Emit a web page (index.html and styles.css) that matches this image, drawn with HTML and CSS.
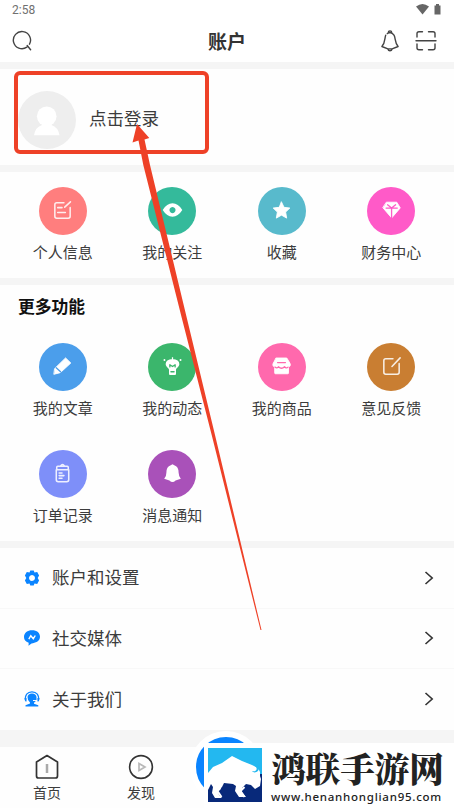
FILE: index.html
```html
<!DOCTYPE html>
<html lang="zh-CN">
<head>
<meta charset="utf-8">
<title>账户</title>
<link rel="stylesheet" href="styles.css">
</head>
<body>
<div class="screen">
  <div class="status">
    <span>2:58</span>
    <svg width="26" height="13" viewBox="0 0 26 13"><path d="M0 3.5Q6.5-1.5 13 3.5L6.5 11.5Z" fill="#666"/><path d="M20 1h3v1.5h1.5v9h-6v-9H20z" fill="#666"/></svg>
  </div>
  <header class="bar">
    <svg class="ico" width="22" height="22" viewBox="0 0 22 22"><path d="M14.800 17.200A8.600 8.600 0 1 1 17.500 14.200M15.200 15.500l3.400 4.300"/></svg>
    <h1>账户</h1>
    <div class="actions">
      <svg class="ico" width="20" height="24" viewBox="0 0 20 24"><path d="M5.700 6.200C4.500 9 5.500 13.500 1.900 17.500l6 2.400h4.200l6-2.400C14.500 13.500 15.800 9 14 6.200 12.900 4.500 11.500 3.700 10 3.500 8.900 3.700 8 4.100 7.300 4.600M8.300 3.400c0-2 3.400-2 3.400 0M7.900 20c.6 2.300 3.600 2.300 4.200 0"/></svg>
      <svg class="ico" width="22" height="22" viewBox="0 0 22 22"><path d="M2 7V3.500Q2 1.700 4 1.700h3.500M13.500 1.700H18q2 0 2 1.800V7M2 14v4q0 1.700 2 1.700h3.500M13.500 19.700H18q2 0 2-1.700v-4M1 10.700h20"/></svg>
    </div>
  </header>

  <section class="profile">
    <svg class="avatar" width="58" height="58" viewBox="0 0 58 58"><circle cx="29" cy="29" r="29" fill="#eee"/><circle cx="28.700" cy="25.300" r="9.800" fill="#fff"/><path d="M24 32h9.500v2q6.500 2 8 10.300H16q1.500-8.300 8-10.300z" fill="#fff"/></svg>
    <span>点击登录</span>
  </section>

  <section class="grid top">
    <div class="item"><div class="disc coral"><svg class="glyph line" viewBox="0 0 24 24"><path d="M13.500 4H6Q4 4 4 6v12q0 2 2 2h12q2 0 2-2V9M14.300 8.500l6-5.500M7 9h4.500M7 14h8"/></svg></div><span>个人信息</span></div>
    <div class="item"><div class="disc teal"><svg class="glyph solid" viewBox="0 0 24 24"><path fill-rule="evenodd" d="M.8 11.500Q5.500 3.800 12 3.800t11.200 7.700Q18.500 19 12 19T.8 11.500zM12 8a3.500 3.500 0 1 0 .01 0z"/></svg></div><span>我的关注</span></div>
    <div class="item"><div class="disc cyan"><svg class="glyph solid round" viewBox="0 0 24 24"><path d="M12 2.300l2.900 6.100 6.600.8-4.800 4.600 1.200 6.900L12 17.300l-5.900 3.400 1.200-6.900-4.800-4.600 6.600-.8z"/></svg></div><span>收藏</span></div>
    <div class="item"><div class="disc pink"><svg class="glyph solid round" viewBox="0 0 24 24"><path d="M6.500 2.500h11.500l4 6.500L12.200 20.500 2.300 9z"/><path class="cut" d="M5.800 9.200h12.800M7.500 5.500l4.600 3.700 4.600-3.700M12.100 9.500V20"/></svg></div><span>财务中心</span></div>
  </section>

  <section class="more">
    <h2>更多功能</h2>
    <div class="grid">
      <div class="item"><div class="disc blue"><svg class="glyph solid round" viewBox="0 0 24 24"><path d="M3.200 14.200L15.500 2.200 21.500 8 9.500 19 2.500 20.800z"/><path class="cut" d="M4.800 13.500l5 4.500"/></svg></div><span>我的文章</span></div>
      <div class="item"><div class="disc green"><svg class="glyph solid" viewBox="0 0 24 24"><path d="M8 15.500C7.500 13.500 4.200 12.500 4.200 9.200Q4.200 3.800 12 3.500q7.800.3 7.800 5.700c0 3.300-3.300 4.300-3.800 6.300v5q0 1.200-1.200 1.200H9.200Q8 21.700 8 20.500zM11.300 1.300h1.400v3h-1.400z"/><circle cx="2.800" cy="4.500" r="1.100"/><circle cx="21.200" cy="4.500" r="1.100"/><path class="cut" d="M9 12.500V10l3 2 3-2v2.500M10.200 18h3.600"/></svg></div><span>我的动态</span></div>
      <div class="item"><div class="disc rose"><svg class="glyph solid round" viewBox="0 0 24 24"><path d="M6 2.300h12l2.500 4q3.500 5-.5 6.200v6.800q0 1-1 1H5.200q-1 0-1-1v-6.800Q.2 11.300 3.600 6.300z"/><path class="cut" d="M7.500 7.500h9M4.500 12.700q2.500 2 4-.4 3.500 3.400 7 0 2 2.400 4 .4"/></svg></div><span>我的商品</span></div>
      <div class="item"><div class="disc brown"><svg class="glyph line" viewBox="0 0 24 24"><path d="M13.500 4H6Q4 4 4 6v12q0 2 2 2h12q2 0 2-2V9M12.500 12l8.500-9"/></svg></div><span>意见反馈</span></div>
      <div class="item"><div class="disc violet"><svg class="glyph line" viewBox="0 0 24 24"><path d="M5.500 8h13v10.500q0 2-2 2h-9q-2 0-2-2zM6 7V5.500q0-1 1-1h10q1 0 1 1V7M10 4.200q2-3 4 0M8.500 11.500h3M8.500 14.200h5M8.500 17h3"/></svg></div><span>订单记录</span></div>
      <div class="item"><div class="disc purple"><svg class="glyph solid" viewBox="0 0 24 24"><path d="M12 1.500l2 1.200q5 1.800 5 8.300.2 4.500 2.500 7l-6 2Q12 23.500 8.500 20l-6-2Q5 15.500 5 11q0-6.500 5-8.300z"/></svg></div><span>消息通知</span></div>
    </div>
  </section>

  <nav class="list">
    <div class="row"><svg width="16" height="16" viewBox="0 0 16 16"><path fill="#0a84ff" fill-rule="evenodd" d="M6.300.5h3.400l.8 2 2.700-.4 1.900 3.300L13.700 8l1.400 2.600-1.900 3.300-2.700-.4-.8 2H6.300l-.8-2-2.700.4L.9 10.600 2.300 8 .9 5.400l1.900-3.300 2.700.4zM8 5a3 3 0 1 0 .01 0z"/></svg><span>账户和设置</span><svg class="chev" width="10" height="14" viewBox="0 0 10 14"><path d="M1.500 1l6.700 6-6.700 6"/></svg></div>
    <div class="row"><svg width="16" height="16" viewBox="0 0 16 16"><path fill="#0a84ff" d="M8 .2c5 0 8 2.600 8 6.600 0 4.500-4.700 6.300-8.500 6.600l-3 2.400.2-3C1.500 11.800 0 9.700 0 7 0 2.900 3.500.2 8 .2z"/><path d="M4.800 9.200l2-3.500 2.500 3 2-3.200" fill="none" stroke="#fff" stroke-width="1.400"/></svg><span>社交媒体</span><svg class="chev" width="10" height="14" viewBox="0 0 10 14"><path d="M1.500 1l6.700 6-6.700 6"/></svg></div>
    <div class="row"><svg width="16" height="16" viewBox="0 0 16 16"><path fill="none" stroke="#0a84ff" stroke-width="1.200" d="M1.600 9.500C.5 4 3.500.8 8 .8s7.500 3.200 6.400 8.700"/><path fill="#0a84ff" d="M3.500 6Q4 2.500 8 2.500T12.500 6v3H9v1h2.800L10 11.700v1l4.300 1.500V15.500H1.500v-1.300L6 12.500v-1Q3.500 9.500 3.500 6zM.5 7h2v3.500H1.500Q.5 9 .5 7zM13.500 7h2q0 2-1 3.500h-1z"/></svg><span>关于我们</span><svg class="chev" width="10" height="14" viewBox="0 0 10 14"><path d="M1.500 1l6.700 6-6.700 6"/></svg></div>
  </nav>

  <footer class="tabs">
    <div class="tab"><svg width="24" height="26" viewBox="0 0 24 26"><path d="M12 1.500L1.500 8v14q0 2 2 2h17q2 0 2-2V8z" fill="none" stroke="#333" stroke-width="1.700" stroke-linejoin="round"/><path d="M12 10v9" stroke="#aaa" stroke-width="2.500"/></svg><span>首页</span></div>
    <div class="tab"><svg width="26" height="26" viewBox="0 0 26 26"><circle cx="13" cy="13" r="11.400" fill="none" stroke="#333" stroke-width="1.600"/><path d="M11 9.500l6 3.500-6 3.500z" fill="none" stroke="#b8b8b8" stroke-width="1.700"/></svg><span>发现</span></div>
  </footer>
  <div class="publish"></div>

  <div class="brand">
    <svg width="54" height="54" viewBox="0 0 54 54"><path fill="#23b8f0" d="M0 0h54v26H0z"/><path fill="#08297a" d="M0 26h54v28H0z"/><path fill="#fff" d="M0 25L5 19 14 15 24 8 34 13 44 17 50 20 52 24 52 28 53 31 52 38 47 41 43 37 38 36 34 40 34 44 38 49H31L27 43 28 38 25 36 16 35 14 39 10 43 11 47 14 50H7L4 45 5 39 3 36 0 42z"/><path fill="#23b8f0" d="M47 11C43 14 45 17 48 19 50 22 47 24 44 23 46 26 51 24 51 20 51 17 45 16 47 11z"/><path fill="none" stroke="#08297a" stroke-width="1.500" d="M15 40l-3 3 3 4M39 38l-4 4 4 5"/><path fill="none" stroke="#fff" stroke-width="2" d="M12.500 40l-3 3 4 6M36.500 39l-4 4 4 6"/></svg>
    <div class="brandtext"><strong>鸿联手游网</strong><span>www.henanhonglian95.com</span></div>
  </div>

  <div class="frame"></div>
  <svg class="arrow" width="454" height="808" viewBox="0 0 454 808"><path fill="#ee4127" d="M137 124L149.300 138 144.500 139.500 150 165 187.300 320 215 435 261.500 630 260.500 630 211.700 435 182.300 320 143.300 165 138.500 140.500 132.500 142.500z"/></svg>
</div>
</body>
</html>
```
FILE: styles.css
```css
* { box-sizing: border-box; }
body { margin: 0; background: #f5f5f5; color: #3c3c3c; font-family: "Noto Sans CJK SC", sans-serif; }
svg { display: block; flex: none; }
h1, h2 { margin: 0; }
.screen { position: relative; width: 454px; height: 808px; overflow: hidden; display: flex; flex-direction: column; }
.status { height: 20px; flex: none; background: #fff; display: flex; justify-content: space-between; align-items: center; padding: 0 12px; font: 12px Roboto, sans-serif; color: #707070; }
.status svg { margin: -1px 0 0; }
.bar { height: 42px; flex: none; background: #fff; display: grid; grid-template-columns: 1fr auto 1fr; align-items: center; padding: 0 17px 0 12px; }
.bar h1 { font-size: 19px; line-height: 24px; margin-left: 5px; color: #333; }
.ico { fill: none; stroke: #444; stroke-width: 1.4; stroke-linecap: round; stroke-linejoin: round; }
.actions { display: flex; justify-content: flex-end; align-items: center; gap: 15px; }
.profile { height: 96px; flex: none; margin-top: 7px; padding: 6px 18px 0; background: #fefefe; display: flex; align-items: center; gap: 13px; font-size: 17.5px; }
.profile span { margin-top: -5px; }
.grid { display: grid; grid-template-columns: repeat(4, 1fr); padding: 0 8px; }
.grid.top { height: 106px; flex: none; margin-top: 7px; padding-top: 15px; background: #fefefe; }
.item { height: 107px; display: flex; flex-direction: column; align-items: center; font-size: 15px; line-height: 22px; gap: 6px; }
.disc { width: 48px; height: 48px; flex: none; border-radius: 50%; display: grid; place-items: center; color: var(--c); background: var(--c); }
.coral { --c: #ff7e7e; }
.teal { --c: #34ba9b; }
.cyan { --c: #58bacc; }
.pink { --c: #ff5ac8; }
.blue { --c: #4b9eeb; }
.green { --c: #3bb66c; }
.rose { --c: #ff69ad; }
.brown { --c: #c97e32; }
.violet { --c: #7e8ff9; }
.purple { --c: #a951b9; }
.glyph { width: 21px; height: 21px; margin-top: -1px; fill: none; stroke: #fffd; stroke-width: 1.6; stroke-linecap: round; stroke-linejoin: round; }
.glyph.line { width: 23px; height: 23px; }
.glyph.solid { fill: #fff; stroke: none; }
.glyph.round { stroke: #fff; stroke-width: 1; }
.glyph .cut { fill: none; stroke: currentColor; stroke-width: 1.5; }
.more { height: 256px; flex: none; margin-top: 7px; background: #fefefe; }
.more h2 { height: 58px; padding: 9px 18px 0; font-size: 16.8px; line-height: 24px; color: #111; }
.list { height: 182px; flex: none; margin-top: 7px; background: #fefefe; display: grid; grid-template-rows: repeat(3, 1fr); }
.row { display: flex; align-items: center; gap: 12px; padding: 0 20px 0 24px; font-size: 17.5px; line-height: 24px; border-bottom: 1px solid #f8f8f8; }
.row span { margin-top: -1px; }
.row:last-child { border: 0; padding-bottom: 1px; }
.chev { margin-left: auto; fill: none; stroke: #333; stroke-width: 1.6; }
.tabs { height: 61px; flex: none; margin-top: 17px; background: #fefefe; display: flex; }
.tab { width: 94px; display: flex; flex-direction: column; align-items: center; padding-top: 7px; font-size: 14px; line-height: 20px; gap: 2px; }
.publish { position: absolute; left: 190px; top: 731px; width: 72px; height: 72px; border: 6px solid #fff; border-radius: 50%; background: #0a84ff; }
.brand { position: absolute; left: 204px; top: 743px; width: 250px; height: 65px; background: #fff; padding: 5px 0 0 4px; display: flex; gap: 9px; }
.brandtext { display: flex; flex-direction: column; white-space: nowrap; color: #222; }
.brandtext strong { font: 900 34.6px/38px "Noto Serif CJK SC", "Noto Sans CJK SC", serif; }
.brandtext span { font: 500 11.5px/14px "Noto Sans", sans-serif; letter-spacing: .75px; margin-top: 4px; }
.frame { position: absolute; left: 14px; top: 71px; width: 195px; height: 83px; border: 4px solid #ee4127; border-radius: 6px; }
.arrow { position: absolute; left: 0; top: 0; }
```
